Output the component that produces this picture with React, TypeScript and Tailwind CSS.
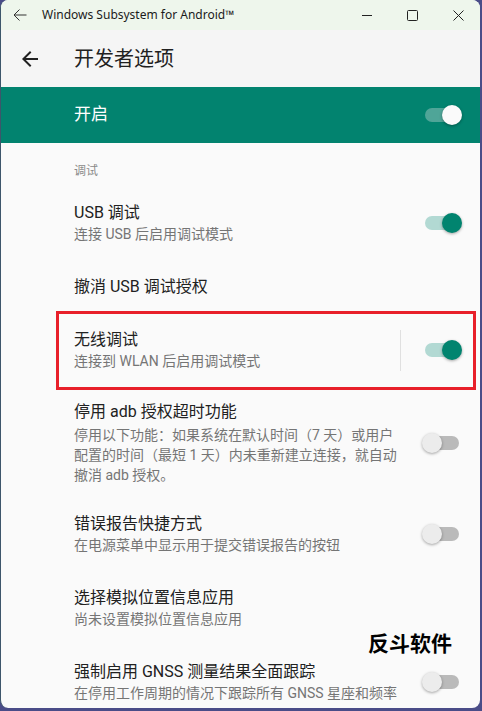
const cjk = "font-['Roboto','Noto_Sans_CJK_SC',sans-serif]";

type Pref = {
    title: string;
    summary?: string;
    toggle?: "on" | "off";
};

const Switch = ({ state }: { state: "on" | "off" | "bar" }) => (
    <div className="relative w-10 h-5 shrink-0">
        <div
            className={`absolute left-[3px] right-[3px] top-[3px] h-[14px] rounded-full ${
                state === "bar" ? "bg-[#4fa598]" : state === "on" ? "bg-[#b2d9d3]" : "bg-[#bababa]"
            }`}
        />
        <div
            className={`absolute top-0 w-5 h-5 rounded-full shadow-[0_1px_3px_rgba(0,0,0,0.35)] ${
                state === "off" ? "left-0 bg-[#ececec]" : "right-0"
            } ${state === "bar" ? "bg-[#fafafa]" : ""} ${state === "on" ? "bg-[#01846f]" : ""}`}
        />
    </div>
);

const Row = ({ pref, divider, pad = "py-4" }: { pref: Pref; divider?: boolean; pad?: string }) => (
    <div className={`flex items-center pl-[73px] ${pad}`}>
        <div className="flex-1 min-w-0">
            <div className="text-[16px] leading-[22px] text-[#212121]">{pref.title}</div>
            {pref.summary && (
                <div className="text-[14px] leading-[20px] text-[#757575]">{pref.summary}</div>
            )}
        </div>
        <div className="w-[80px] h-[41px] shrink-0 flex items-center">
            {divider && <div className="w-px h-[41px] bg-[#e0e0e0]" />}
            {pref.toggle && (
                <div className={divider ? "ml-[21px]" : "ml-[22px]"}>
                    <Switch state={pref.toggle} />
                </div>
            )}
        </div>
    </div>
);

const App = () => {
    return (
        <div className="w-[482px] h-[711px] bg-[#4a4c88] overflow-hidden">
            <div className={`relative w-[480px] h-[708px] rounded-lg overflow-hidden bg-[#fafafa] border-l border-[#3d566b] ${cjk}`}>
                {/* Windows title bar */}
                <div className="h-[30px] bg-[#eef6ec] flex items-center font-['Noto_Sans',sans-serif] text-[12px] text-[#1b1b1b]">
                    <svg width="14" height="12" viewBox="0 0 14 12" className="ml-[12px]" fill="none" stroke="#333" strokeWidth="1">
                        <path d="M13.5 6H1 M6.5 0.5L1 6l5.5 5.5" />
                    </svg>
                    <span className="ml-[15px]">Windows Subsystem for Android™</span>
                    <div className="ml-auto flex items-center">
                        <svg width="10" height="10" viewBox="0 0 10 10" className="mr-[35px]" stroke="#222" strokeWidth="1">
                            <path d="M0 5.5H10" />
                        </svg>
                        <svg width="11" height="11" viewBox="0 0 11 11" className="mr-[35px]" fill="none" stroke="#222" strokeWidth="1">
                            <rect x="0.5" y="0.5" width="10" height="10" rx="1" />
                        </svg>
                        <svg width="11" height="11" viewBox="0 0 11 11" className="mr-[16px]" stroke="#222" strokeWidth="1">
                            <path d="M0.5 0.5L10.5 10.5M10.5 0.5L0.5 10.5" />
                        </svg>
                    </div>
                </div>

                {/* App bar */}
                <div className="h-[57px] bg-[#f5f5f5] flex items-center pl-[17px]">
                    <svg width="24" height="24" viewBox="0 0 24 24" fill="#212121">
                        <path d="M20 11H7.83l5.59-5.59L12 4l-8 8 8 8 1.41-1.41L7.83 13H20v-2z" />
                    </svg>
                    <h1 className="ml-8 text-[20px] text-[#212121]">开发者选项</h1>
                </div>

                {/* Master switch */}
                <div className="h-[56px] bg-[#02836f] flex items-center pl-[73px] pr-[18px]">
                    <span className="flex-1 text-[17px] text-white">开启</span>
                    <Switch state="bar" />
                </div>

                {/* Category */}
                <div className="h-[43px] pl-[73px] pt-[20px] text-[12px] leading-[16px] text-[#8a8a8a]">调试</div>

                <Row pref={{ title: "USB 调试", summary: "连接 USB 后启用调试模式", toggle: "on" }} />
                <Row pref={{ title: "撤消 USB 调试授权" }} pad="py-[6px]" />
                <div className="relative">
                    <Row pref={{ title: "无线调试", summary: "连接到 WLAN 后启用调试模式", toggle: "on" }} divider />
                    <div className="absolute top-[-2px] bottom-[-3px] left-[55px] right-[4px] border-[3px] border-[#e8202a]" />
                </div>
                <div className="flex items-center pl-[73px] pt-[14px] pb-[12px]">
                    <div className="flex-1 min-w-0">
                        <div className="text-[16px] leading-[22px] text-[#212121]">停用 adb 授权超时功能</div>
                        <div className="mt-[2px] text-[14px] leading-[20px] text-[#757575]">
                            停用以下功能：如果系统在默认时间（7 天）或用户配置的时间（最短 1 天）内未重新建立连接，就自动撤消 adb 授权。
                        </div>
                    </div>
                    <div className="w-[80px] shrink-0 pl-[22px]">
                        <Switch state="off" />
                    </div>
                </div>
                <Row pref={{ title: "错误报告快捷方式", summary: "在电源菜单中显示用于提交错误报告的按钮", toggle: "off" }} />
                <Row pref={{ title: "选择模拟位置信息应用", summary: "尚未设置模拟位置信息应用" }} />
                <Row pref={{ title: "强制启用 GNSS 测量结果全面跟踪", summary: "在停用工作周期的情况下跟踪所有 GNSS 星座和频率", toggle: "off" }} />

                {/* watermark */}
                <div className="absolute left-[367px] top-[634px] text-[21px] leading-[21px] font-bold text-black">反斗软件</div>
            </div>
        </div>
    );
};

export default App;
